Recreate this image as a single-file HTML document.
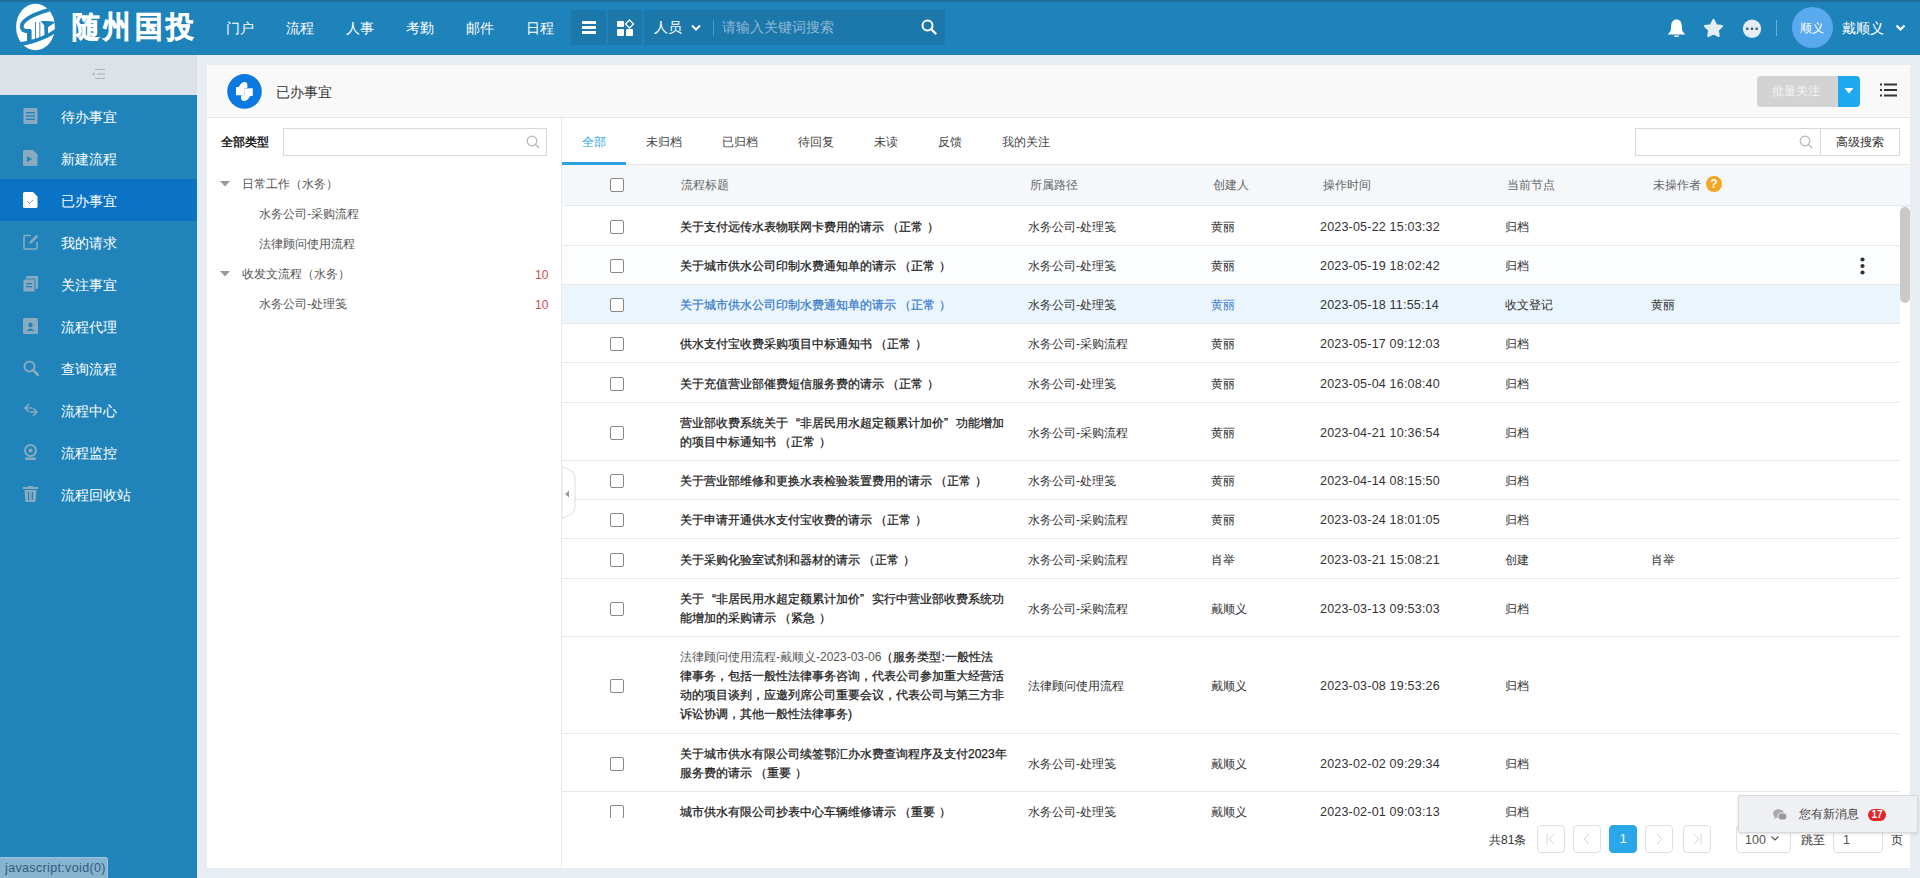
<!DOCTYPE html>
<html><head><meta charset="utf-8">
<style>
*{box-sizing:border-box;margin:0;padding:0}
html,body{width:1920px;height:878px;overflow:hidden;background:#e8edf4;font-family:"Liberation Sans",sans-serif;color:#333;font-size:12px}
.a{position:absolute;white-space:nowrap}
#hdr{position:absolute;left:0;top:0;width:1920px;height:55px;background:#1f83bb;border-top:2px solid #1e6d9c}
#hdr .nav{position:absolute;top:18px;font-size:14px;color:#fff;line-height:16px}
#side{position:absolute;left:0;top:55px;width:197px;height:823px;background:#2084bb}
#side .col{position:absolute;left:0;top:0;width:197px;height:40px;background:#dde2e9}
#side .it{position:absolute;left:0;width:197px;height:42px}
#side .it.on{background:#0a73c6}
#side .it .t{position:absolute;left:61px;top:13.5px;font-size:14px;line-height:16px;color:#fff}
#side .it svg{position:absolute;left:23px;top:13px}
#panel{position:absolute;left:207px;top:65px;width:1703px;height:803px;background:#fff}
#ph{position:absolute;left:0;top:0;width:1703px;height:53px;background:#f9f9f9;border-bottom:1px solid #e6e6e6}
.pb{top:825px;width:28px;height:28px;border:1px solid #e0e0e0;border-radius:4px;background:#fff}

#tbl{position:absolute;left:355px;top:100px;width:1348px;height:653px;overflow:hidden}
#tbl .hrow{position:absolute;left:0;top:0;width:1348px;height:42px;background:#f5f8fb;border-bottom:2px solid #e6ebf0}
#tbl .hrow .c{top:13px;color:#666;line-height:14px}
#tbl .q{position:absolute;left:1144px;top:11px;width:16px;height:16px;border-radius:50%;background:#f5a524;color:#fff;font-size:12px;line-height:16px;text-align:center;font-weight:bold}
#tbl .row{position:absolute;left:0;width:1338px;border-bottom:1px solid #e8e8e8;background:#fff}
#tbl .row.hl{background:#eaf5fd}
#tbl .row.hv{background:#fbfdff}
#tbl .in{position:relative;width:1338px}
#tbl .c{position:absolute;white-space:nowrap;font-size:12px;color:#333}
#tbl .cb{position:absolute;left:48px;top:50%;margin-top:-6px;width:14px;height:14px;border:1px solid #888;border-radius:2px;background:#fff}
#tbl .hrow .cb{margin-top:0}
#tbl .row .c{top:50%;transform:translateY(-50%);margin-top:1px;line-height:19px}
#tbl .t{left:118px;color:#1a1a1a;-webkit-text-stroke:0.25px #1a1a1a}
#tbl .t .lt{color:#555;-webkit-text-stroke:0}
#tbl .p{left:466px;color:#333}
#tbl .ql{display:inline-block;width:12px;text-align:right}
#tbl .qr{display:inline-block;width:12px;text-align:left}
#tbl .u{left:649px}
#tbl .d{left:758px;font-size:12.5px!important;letter-spacing:0.2px}
#tbl .n{left:943px}
#tbl .o{left:1089px}
#tbl .hl .t,#tbl .hl .u{color:#3a7dcc;-webkit-text-stroke-color:#3a7dcc}
#tbl .sb{position:absolute;left:1338px;top:42px;width:10px;height:96px;border-radius:5px;background:#c9c9c9}
</style></head><body>
<div id="hdr">
<svg class="a" style="left:10px;top:-2px" width="50" height="55" viewBox="0 0 50 55">
<ellipse cx="25.5" cy="27" rx="19.4" ry="23.2" fill="#fff"/>
<path d="M39 9.8 C 30 12, 17 17, 12.8 23 C 10.5 27, 12 30.5, 16 31 L 21 31" fill="none" stroke="#1f83bb" stroke-width="3.8"/>
<rect x="17" y="30" width="4.6" height="12" fill="#1f83bb"/>
<rect x="25" y="22" width="0.9" height="19" fill="#1f83bb"/>
<rect x="29.4" y="22" width="0.9" height="17" fill="#1f83bb"/>
<path d="M30.5 21.2 C 36 20.8, 41 21, 45.5 22 C 42 24.5, 38 27, 34.5 30 L 34.5 26 C 33.5 24, 32 22.5, 30.5 21.2 Z" fill="#1f83bb"/>
<path d="M34.4 26 L 38 26 L 38 36 L 34.4 37 Z" fill="#1f83bb"/>
<path d="M5 43 C 18 41.5, 34 37, 46 28.5 L 46 32.5 C 36 40, 20 45, 7 46.5 Z" fill="#1f83bb"/>
</svg>
<div class="a" style="left:72px;top:7px;font-size:30px;line-height:36px;font-weight:900;color:#fff;-webkit-text-stroke:0.6px #fff;letter-spacing:4px;transform:scaleX(0.92);transform-origin:0 0">随州国投</div>
<div class="nav a" style="left:226px">门户</div>
<div class="nav a" style="left:286px">流程</div>
<div class="nav a" style="left:346px">人事</div>
<div class="nav a" style="left:406px">考勤</div>
<div class="nav a" style="left:466px">邮件</div>
<div class="nav a" style="left:526px">日程</div>
<div class="a" style="left:571px;top:8px;width:35px;height:35px;background:#1c77ab"></div>
<div class="a" style="left:608px;top:8px;width:34px;height:35px;background:#1c77ab"></div>
<div class="a" style="left:644px;top:8px;width:301px;height:35px;background:#1c77ab"></div>
<svg class="a" style="left:582px;top:19px" width="14" height="13" viewBox="0 0 14 13"><rect x="0" y="0" width="14" height="3" fill="#fff"/><rect x="0" y="5" width="14" height="3" fill="#fff"/><rect x="0" y="10" width="14" height="3" fill="#fff"/></svg>
<svg class="a" style="left:617px;top:17px" width="18" height="17" viewBox="0 0 18 17"><rect x="0" y="2" width="7" height="6" rx="1" fill="#fff"/><rect x="0" y="10" width="7" height="7" rx="1" fill="#fff"/><rect x="9" y="10" width="7" height="7" rx="1" fill="#fff"/><path d="M12.5 1 L16.5 5 L12.5 9 L8.5 5 Z" fill="none" stroke="#fff" stroke-width="1.3"/></svg>
<div class="nav a" style="left:654px;top:17px">人员</div>
<svg class="a" style="left:691px;top:22px" width="10" height="8" viewBox="0 0 10 8"><path d="M1 1.5 L5 5.5 L9 1.5" fill="none" stroke="#fff" stroke-width="2"/></svg>
<div class="a" style="left:713px;top:18px;width:1px;height:16px;background:#4a9cc8"></div>
<div class="nav a" style="left:722px;top:17px;color:#8fb9d4">请输入关键词搜索</div>
<svg class="a" style="left:921px;top:17px" width="16" height="16" viewBox="0 0 16 16"><circle cx="6.5" cy="6.5" r="5" fill="none" stroke="#fff" stroke-width="2"/><path d="M10 10 L14.5 14.5" stroke="#fff" stroke-width="2.4" stroke-linecap="round"/></svg>
<svg class="a" style="left:1666px;top:14.5px" width="21" height="22" viewBox="0 0 21 22"><path d="M10.5 2.5 C 14 2.5, 15.5 5, 15.8 8.5 L 16.3 14 L 19.3 17.6 L 1.7 17.6 L 4.7 14 L 5.2 8.5 C 5.5 5, 7 2.5, 10.5 2.5 Z" fill="#fff"/><path d="M7.8 18.6 L13.2 18.6 C 12.8 20.6, 8.2 20.6, 7.8 18.6 Z" fill="#fff"/></svg>
<svg class="a" style="left:1703px;top:15px" width="21" height="22" viewBox="0 0 21 22"><path d="M10.5 3 L13.1 8.3 L18.9 9.1 L14.7 13.1 L15.7 18.9 L10.5 16.2 L5.3 18.9 L6.3 13.1 L2.1 9.1 L7.9 8.3 Z" fill="#e6eef5" stroke="#e6eef5" stroke-width="2.2" stroke-linejoin="round"/></svg>
<svg class="a" style="left:1741px;top:14.5px" width="22" height="22" viewBox="0 0 22 22"><circle cx="11" cy="11.8" r="9.2" fill="#e6ecf2"/><circle cx="6.3" cy="11.8" r="1.3" fill="#2c5a72"/><circle cx="11" cy="11.8" r="1.3" fill="#2c5a72"/><circle cx="15.7" cy="11.8" r="1.3" fill="#2c5a72"/></svg>
<div class="a" style="left:1776px;top:18px;width:1px;height:16px;background:#6aaed4"></div>
<div class="a" style="left:1792px;top:5px;width:41px;height:41px;border-radius:50%;background:#58a9ee"></div>
<div class="a" style="left:1800px;top:19px;font-size:12px;line-height:14px;color:#fff">顺义</div>
<div class="nav a" style="left:1842px;top:18px">戴顺义</div>
<svg class="a" style="left:1895px;top:22px" width="11" height="8" viewBox="0 0 11 8"><path d="M1.5 1.5 L5.5 5.5 L9.5 1.5" fill="none" stroke="#fff" stroke-width="2.2"/></svg>
</div>
<div id="side"><div class="col"><svg class="a" style="left:92px;top:14px" width="13" height="10" viewBox="0 0 13 10"><rect x="3" y="0" width="10" height="1" fill="#aab2bb"/><rect x="5" y="4.5" width="8" height="1" fill="#aab2bb"/><rect x="3" y="9" width="10" height="1" fill="#aab2bb"/><path d="M0 5 L2.5 3 L2.5 7 Z" fill="#aab2bb"/></svg></div><div class="it" style="top:40px"><svg width="15" height="16" viewBox="0 0 15 16"><rect x="0.5" y="0" width="14" height="16" rx="1.5" fill="#8aaac0"/><rect x="3" y="4" width="9" height="1.4" fill="#2084bb"/><rect x="3" y="7.3" width="9" height="1.4" fill="#2084bb"/><rect x="3" y="10.6" width="9" height="1.4" fill="#2084bb"/></svg><div class="t">待办事宜</div></div><div class="it" style="top:82px"><svg width="15" height="16" viewBox="0 0 15 16"><path d="M1.5 0 H10 L14.5 4.5 V14.5 Q14.5 16 13 16 H1.5 Q0 16 0 14.5 V1.5 Q0 0 1.5 0 Z" fill="#8aaac0"/><path d="M4 6 L9 9 L4 12 Z" fill="#2084bb"/></svg><div class="t">新建流程</div></div><div class="it on" style="top:124px"><svg width="15" height="16" viewBox="0 0 15 16"><path d="M1.5 0 H10 L14.5 4.5 V14.5 Q14.5 16 13 16 H1.5 Q0 16 0 14.5 V1.5 Q0 0 1.5 0 Z" fill="#fff"/><path d="M4.5 9.5 L6.5 11.5 L10 8" fill="none" stroke="#888" stroke-width="0.9"/></svg><div class="t">已办事宜</div></div><div class="it" style="top:166px"><svg width="16" height="16" viewBox="0 0 16 16"><path d="M8 1.5 H2 Q1 1.5 1 2.5 V14 Q1 15 2 15 H13 Q14 15 14 14 V8" fill="none" stroke="#8aaac0" stroke-width="1.6"/><path d="M6 10 L7 7 L13.5 0.8 L15.3 2.6 L9 9 Z" fill="#8aaac0"/></svg><div class="t">我的请求</div></div><div class="it" style="top:208px"><svg width="15" height="16" viewBox="0 0 15 16"><rect x="3" y="0" width="12" height="13" rx="1" fill="#8aaac0"/><rect x="0" y="3" width="12" height="13" rx="1" fill="#8aaac0" stroke="#2084bb" stroke-width="1"/><rect x="3" y="7" width="6" height="1.3" fill="#2084bb"/><rect x="3" y="10" width="6" height="1.3" fill="#2084bb"/></svg><div class="t">关注事宜</div></div><div class="it" style="top:250px"><svg width="15" height="16" viewBox="0 0 15 16"><rect x="0" y="0" width="15" height="16" rx="1.5" fill="#8aaac0"/><circle cx="7.5" cy="7" r="2.2" fill="#2084bb"/><path d="M3.5 13 Q7.5 8 11.5 13 Z" fill="#2084bb"/></svg><div class="t">流程代理</div></div><div class="it" style="top:292px"><svg width="16" height="16" viewBox="0 0 16 16"><circle cx="6.5" cy="6.5" r="5" fill="none" stroke="#8aaac0" stroke-width="2"/><path d="M10 10 L15 15" stroke="#8aaac0" stroke-width="2.6" stroke-linecap="round"/></svg><div class="t">查询流程</div></div><div class="it" style="top:334px"><svg width="16" height="16" viewBox="0 0 16 16"><path d="M6 2 L2 6 L6 10 M10 6 L14 10 L10 14 M2 6 H9 M14 10 H7" fill="none" stroke="#8aaac0" stroke-width="1.5"/></svg><div class="t">流程中心</div></div><div class="it" style="top:376px"><svg width="15" height="16" viewBox="0 0 15 16"><circle cx="7.5" cy="6.5" r="5.5" fill="none" stroke="#8aaac0" stroke-width="2"/><circle cx="7.5" cy="6.5" r="2" fill="#8aaac0"/><rect x="2" y="13.5" width="11" height="2.5" rx="1" fill="#8aaac0"/></svg><div class="t">流程监控</div></div><div class="it" style="top:418px"><svg width="15" height="16" viewBox="0 0 15 16"><rect x="0" y="1" width="15" height="2" fill="#8aaac0"/><rect x="5" y="0" width="5" height="2" fill="#8aaac0"/><path d="M1.5 4 H13.5 L12.5 16 H2.5 Z" fill="#8aaac0"/><rect x="5" y="6" width="1.3" height="8" fill="#2084bb"/><rect x="8.7" y="6" width="1.3" height="8" fill="#2084bb"/></svg><div class="t">流程回收站</div></div></div>
<div id="panel"><div id="ph">
<svg class="a" style="left:17px;top:7px" width="40" height="40" viewBox="0 0 40 40">
<circle cx="20.5" cy="19.4" r="17.3" fill="#0b79e0"/>
<path d="M12 15.2 L15 14.8 C 16.2 11.5, 18.5 10, 21 10 C 23.2 10.3, 23.8 12.5, 23.3 16 L 20.3 16.5 L 20.3 23.3 L 12 23.3 Z" fill="#fff"/>
<path d="M28.8 16.3 L 28.8 23.8 L 25.8 24.2 C 24.5 27.5, 22 29, 19.5 29 C 17.3 28.7, 16.7 26.5, 17.2 23.3 L 20.3 23.3 L 20.3 16.5 Z" fill="#fff"/>
</svg>
<div class="a" style="left:69px;top:19px;font-size:14px;line-height:16px;color:#333">已办事宜</div>
<div class="a" style="left:1550px;top:11px;width:81px;height:31px;background:#d3d3d3;border-radius:4px 0 0 4px"></div>
<div class="a" style="left:1565px;top:19px;font-size:12px;line-height:14px;color:#f4f4f4">批量关注</div>
<div class="a" style="left:1631px;top:11px;width:22px;height:31px;background:#1ea9ef;border-radius:0 4px 4px 0"></div>
<svg class="a" style="left:1637px;top:23px" width="10" height="6" viewBox="0 0 10 6"><path d="M0.5 0 L9.5 0 L5 5.5 Z" fill="#fff"/></svg>
<svg class="a" style="left:1673px;top:18px" width="17" height="14" viewBox="0 0 17 14"><rect x="0" y="0.5" width="2" height="2" fill="#333"/><rect x="4" y="0.5" width="13" height="2" fill="#333"/><rect x="0" y="6" width="2" height="2" fill="#333"/><rect x="4" y="6" width="13" height="2" fill="#333"/><rect x="0" y="11.5" width="2" height="2" fill="#333"/><rect x="4" y="11.5" width="13" height="2" fill="#333"/></svg>
</div><div class="a" style="left:0;top:53px;width:355px;height:750px;border-right:1px solid #ebebeb">
<div class="a" style="left:14px;top:17px;font-size:12px;line-height:14px;font-weight:bold;color:#222">全部类型</div>
<div class="a" style="left:76px;top:10px;width:264px;height:28px;border:1px solid #d9d9d9;background:#fff"></div>
<svg class="a" style="left:319px;top:17px" width="14" height="14" viewBox="0 0 14 14"><circle cx="6" cy="6" r="4.8" fill="none" stroke="#b5b5b5" stroke-width="1.2"/><path d="M9.5 9.5 L13 13" stroke="#b5b5b5" stroke-width="1.3"/></svg>
<svg class="a" style="left:13px;top:63px" width="10" height="6" viewBox="0 0 10 6"><path d="M0 0 L10 0 L5 5.5 Z" fill="#999"/></svg>
<div class="a" style="left:35px;top:59px;font-size:12px;line-height:14px;color:#555">日常工作（水务）</div>
<div class="a" style="left:52px;top:89px;font-size:12px;line-height:14px;color:#555">水务公司-采购流程</div>
<div class="a" style="left:52px;top:119px;font-size:12px;line-height:14px;color:#555">法律顾问使用流程</div>
<svg class="a" style="left:13px;top:153px" width="10" height="6" viewBox="0 0 10 6"><path d="M0 0 L10 0 L5 5.5 Z" fill="#999"/></svg>
<div class="a" style="left:35px;top:149px;font-size:12px;line-height:14px;color:#555">收发文流程（水务）</div>
<div class="a" style="left:328px;top:150px;font-size:12px;line-height:14px;color:#cf4a52">10</div>
<div class="a" style="left:52px;top:179px;font-size:12px;line-height:14px;color:#555">水务公司-处理笺</div>
<div class="a" style="left:328px;top:180px;font-size:12px;line-height:14px;color:#cf4a52">10</div>
</div><div class="a" style="left:355px;top:53px;width:1348px;height:47px;border-bottom:1px solid #e8e8e8">
<div class="a" style="left:0;top:44px;width:64px;height:3px;background:#2ba3e0"></div>
<div class="a" style="left:20px;top:17px;font-size:12px;line-height:14px;color:#2ba3e0">全部</div>
<div class="a" style="left:84px;top:17px;font-size:12px;line-height:14px;color:#444">未归档</div>
<div class="a" style="left:160px;top:17px;font-size:12px;line-height:14px;color:#444">已归档</div>
<div class="a" style="left:236px;top:17px;font-size:12px;line-height:14px;color:#444">待回复</div>
<div class="a" style="left:312px;top:17px;font-size:12px;line-height:14px;color:#444">未读</div>
<div class="a" style="left:376px;top:17px;font-size:12px;line-height:14px;color:#444">反馈</div>
<div class="a" style="left:440px;top:17px;font-size:12px;line-height:14px;color:#444">我的关注</div>
<div class="a" style="left:1073px;top:10px;width:265px;height:28px;border:1px solid #d9d9d9"></div>
<div class="a" style="left:1258px;top:10px;width:1px;height:28px;background:#d9d9d9"></div>
<svg class="a" style="left:1237px;top:17px" width="14" height="14" viewBox="0 0 14 14"><circle cx="6" cy="6" r="4.8" fill="none" stroke="#b5b5b5" stroke-width="1.2"/><path d="M9.5 9.5 L13 13" stroke="#b5b5b5" stroke-width="1.3"/></svg>
<div class="a" style="left:1274px;top:17px;font-size:12px;line-height:14px;color:#333">高级搜索</div>
</div><div id="tbl"><div class="hrow"><div class="cb" style="top:13px"></div><div class="c" style="left:119px">流程标题</div><div class="c" style="left:468px">所属路径</div><div class="c" style="left:651px">创建人</div><div class="c" style="left:761px">操作时间</div><div class="c" style="left:945px">当前节点</div><div class="c" style="left:1091px">未操作者</div><div class="q">?</div></div><div class="row" style="top:41px;height:40px"><div class="in" style="height:39px"><div class="cb"></div><div class="c t">关于支付远传水表物联网卡费用的请示 （正常 ）</div><div class="c p">水务公司-处理笺</div><div class="c u">黄丽</div><div class="c d">2023-05-22 15:03:32</div><div class="c n">归档</div><div class="c o"></div></div></div><div class="row hv" style="top:81px;height:39px"><div class="in" style="height:38px"><div class="cb"></div><div class="c t">关于城市供水公司印制水费通知单的请示 （正常 ）</div><div class="c p">水务公司-处理笺</div><div class="c u">黄丽</div><div class="c d">2023-05-19 18:02:42</div><div class="c n">归档</div><div class="c o"></div><svg class="a" style="left:1298px;top:11px" width="5" height="18" viewBox="0 0 5 18"><circle cx="2.5" cy="2.5" r="2.1" fill="#333"/><circle cx="2.5" cy="9" r="2.1" fill="#333"/><circle cx="2.5" cy="15.5" r="2.1" fill="#333"/></svg></div></div><div class="row hl" style="top:120px;height:39px"><div class="in" style="height:38px"><div class="cb"></div><div class="c t">关于城市供水公司印制水费通知单的请示 （正常 ）</div><div class="c p">水务公司-处理笺</div><div class="c u">黄丽</div><div class="c d">2023-05-18 11:55:14</div><div class="c n">收文登记</div><div class="c o">黄丽</div></div></div><div class="row" style="top:159px;height:39px"><div class="in" style="height:38px"><div class="cb"></div><div class="c t">供水支付宝收费采购项目中标通知书 （正常 ）</div><div class="c p">水务公司-采购流程</div><div class="c u">黄丽</div><div class="c d">2023-05-17 09:12:03</div><div class="c n">归档</div><div class="c o"></div></div></div><div class="row" style="top:198px;height:40px"><div class="in" style="height:39px"><div class="cb"></div><div class="c t">关于充值营业部催费短信服务费的请示 （正常 ）</div><div class="c p">水务公司-处理笺</div><div class="c u">黄丽</div><div class="c d">2023-05-04 16:08:40</div><div class="c n">归档</div><div class="c o"></div></div></div><div class="row" style="top:238px;height:58px"><div class="in" style="height:57px"><div class="cb"></div><div class="c t">营业部收费系统关于<span class="ql">“</span>非居民用水超定额累计加价<span class="qr">”</span>功能增加<br>的项目中标通知书 （正常 ）</div><div class="c p">水务公司-采购流程</div><div class="c u">黄丽</div><div class="c d">2023-04-21 10:36:54</div><div class="c n">归档</div><div class="c o"></div></div></div><div class="row" style="top:296px;height:39px"><div class="in" style="height:38px"><div class="cb"></div><div class="c t">关于营业部维修和更换水表检验装置费用的请示 （正常 ）</div><div class="c p">水务公司-处理笺</div><div class="c u">黄丽</div><div class="c d">2023-04-14 08:15:50</div><div class="c n">归档</div><div class="c o"></div></div></div><div class="row" style="top:335px;height:39px"><div class="in" style="height:38px"><div class="cb"></div><div class="c t">关于申请开通供水支付宝收费的请示 （正常 ）</div><div class="c p">水务公司-采购流程</div><div class="c u">黄丽</div><div class="c d">2023-03-24 18:01:05</div><div class="c n">归档</div><div class="c o"></div></div></div><div class="row" style="top:374px;height:40px"><div class="in" style="height:39px"><div class="cb"></div><div class="c t">关于采购化验室试剂和器材的请示 （正常 ）</div><div class="c p">水务公司-采购流程</div><div class="c u">肖举</div><div class="c d">2023-03-21 15:08:21</div><div class="c n">创建</div><div class="c o">肖举</div></div></div><div class="row" style="top:414px;height:58px"><div class="in" style="height:57px"><div class="cb"></div><div class="c t">关于<span class="ql">“</span>非居民用水超定额累计加价<span class="qr">”</span>实行中营业部收费系统功<br>能增加的采购请示 （紧急 ）</div><div class="c p">水务公司-采购流程</div><div class="c u">戴顺义</div><div class="c d">2023-03-13 09:53:03</div><div class="c n">归档</div><div class="c o"></div></div></div><div class="row" style="top:472px;height:97px"><div class="in" style="height:96px"><div class="cb"></div><div class="c t"><span class="lt">法律顾问使用流程-戴顺义-2023-03-06</span>（服务类型:一般性法<br>律事务，包括一般性法律事务咨询，代表公司参加重大经营活<br>动的项目谈判，应邀列席公司重要会议，代表公司与第三方非<br>诉讼协调，其他一般性法律事务)</div><div class="c p">法律顾问使用流程</div><div class="c u">戴顺义</div><div class="c d">2023-03-08 19:53:26</div><div class="c n">归档</div><div class="c o"></div></div></div><div class="row" style="top:569px;height:58px"><div class="in" style="height:57px"><div class="cb"></div><div class="c t">关于城市供水有限公司续签鄂汇办水费查询程序及支付2023年<br>服务费的请示 （重要 ）</div><div class="c p">水务公司-处理笺</div><div class="c u">戴顺义</div><div class="c d">2023-02-02 09:29:34</div><div class="c n">归档</div><div class="c o"></div></div></div><div class="row" style="top:627px;height:39px"><div class="in" style="height:38px"><div class="cb"></div><div class="c t">城市供水有限公司抄表中心车辆维修请示 （重要 ）</div><div class="c p">水务公司-处理笺</div><div class="c u">戴顺义</div><div class="c d">2023-02-01 09:03:13</div><div class="c n">归档</div><div class="c o"></div></div></div><div class="sb"></div></div></div>

<div class="a" style="left:562px;top:466px;width:14px;height:53px;z-index:5">
<svg width="14" height="53" viewBox="0 0 14 53"><path d="M0 0.5 C 4 2, 9 4.5, 11 6.5 Q 13 8.5 13 12 L 13 41 Q 13 44.5 11 46.5 C 9 48.5, 4 51, 0 52.5 Z" fill="#fff" stroke="#dedede" stroke-width="1"/><path d="M3 28 L7 24.5 L7 31.5 Z" fill="#999"/></svg>
</div>
<div class="a pg" style="left:1489px;top:833px;font-size:12px;line-height:14px;color:#333">共81条</div>
<div class="a pb" style="left:1537px"><svg width="26" height="26" viewBox="0 0 26 26"><path d="M9 8 V18 M16 8 L11 13 L16 18" fill="none" stroke="#d6d6d6" stroke-width="1"/></svg></div>
<div class="a pb" style="left:1573px"><svg width="26" height="26" viewBox="0 0 26 26"><path d="M15 8 L10 13 L15 18" fill="none" stroke="#d6d6d6" stroke-width="1"/></svg></div>
<div class="a pb" style="left:1609px;background:#2aa7e8;border-color:#2aa7e8;color:#fff;font-size:13px;line-height:26px;text-align:center">1</div>
<div class="a pb" style="left:1645px"><svg width="26" height="26" viewBox="0 0 26 26"><path d="M11 8 L16 13 L11 18" fill="none" stroke="#d6d6d6" stroke-width="1"/></svg></div>
<div class="a pb" style="left:1683px"><svg width="26" height="26" viewBox="0 0 26 26"><path d="M17 8 V18 M10 8 L15 13 L10 18" fill="none" stroke="#d6d6d6" stroke-width="1"/></svg></div>
<div class="a pb" style="left:1736px;width:55px"></div>
<div class="a" style="left:1745px;top:833px;font-size:12.5px;line-height:14px;color:#555">100</div>
<svg class="a" style="left:1771px;top:836px" width="8" height="5" viewBox="0 0 8 5"><path d="M0.5 0.5 L4 4 L7.5 0.5" fill="none" stroke="#555" stroke-width="1.2"/></svg>
<div class="a" style="left:1801px;top:833px;font-size:12px;line-height:14px;color:#333">跳至</div>
<div class="a pb" style="left:1833px;width:50px"></div>
<div class="a" style="left:1843px;top:833px;font-size:12.5px;line-height:14px;color:#555">1</div>
<div class="a" style="left:1891px;top:833px;font-size:12px;line-height:14px;color:#333">页</div>
<div class="a" style="left:1738px;top:795px;width:180px;height:38px;background:#eff0f3;border:1px solid #d9d9d9;border-radius:2px;box-shadow:0 1px 3px rgba(0,0,0,0.12);z-index:6">
<svg class="a" style="left:34px;top:13px" width="14" height="12" viewBox="0 0 14 12"><ellipse cx="5.5" cy="4.5" rx="5.5" ry="4.2" fill="#aaa"/><path d="M2 7 L1 10 L5 8 Z" fill="#aaa"/><ellipse cx="9.5" cy="7.5" rx="4.5" ry="3.6" fill="#999" stroke="#f2f2f2" stroke-width="1"/></svg>
<div class="a" style="left:60px;top:11px;font-size:12px;line-height:14px;color:#444">您有新消息</div>
<div class="a" style="left:129px;top:12.5px;width:18px;height:12px;border-radius:6px;background:#e3262b;color:#fff;font-size:10px;line-height:12px;text-align:center;font-weight:bold">17</div>
</div>
<div class="a" style="left:0;top:857px;width:108px;height:21px;background:#87b4cf;border:1px solid #9cc4dc;border-left:0;border-bottom:0;border-radius:0 3px 0 0;font-size:12.5px;letter-spacing:0.35px;line-height:20px;color:#2f5d7c;padding-left:5px">javascript:void(0)</div>
</body></html>
